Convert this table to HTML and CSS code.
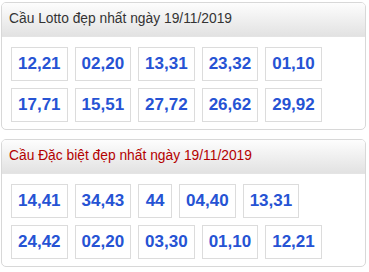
FILE: index.html
```html
<!DOCTYPE html>
<html>
<head>
<meta charset="utf-8">
<link rel="stylesheet" href="styles.css">
</head>
<body>
<div class="panel">
  <div class="head">Cầu Lotto đẹp nhất ngày 19/11/2019</div>
  <div class="body">
    <div class="row"><span class="num">12,21</span><span class="num">02,20</span><span class="num">13,31</span><span class="num">23,32</span><span class="num">01,10</span></div>
    <div class="row"><span class="num">17,71</span><span class="num">15,51</span><span class="num">27,72</span><span class="num">26,62</span><span class="num">29,92</span></div>
  </div>
</div>
<div class="panel">
  <div class="head red">Cầu Đặc biệt đẹp nhất ngày 19/11/2019</div>
  <div class="body">
    <div class="row"><span class="num">14,41</span><span class="num">34,43</span><span class="num">44</span><span class="num">04,40</span><span class="num">13,31</span></div>
    <div class="row"><span class="num">24,42</span><span class="num">02,20</span><span class="num">03,30</span><span class="num">01,10</span><span class="num">12,21</span></div>
  </div>
</div>
</body>
</html>
```
FILE: styles.css
```css
html, body { margin: 0; padding: 0; background: #fff; }
body {
  padding: 2px 4px 0 1px;
  font-family: "Liberation Sans", Arial, sans-serif;
  display: flex;
  flex-direction: column;
  gap: 9px;
}
.panel {
  border: 1px solid #d8d8d8;
  border-radius: 5px;
  overflow: hidden;
  width: 363px;
}
.head {
  height: 33px;
  line-height: 31px;
  padding-left: 7px;
  font-size: 13.8px;
  color: #333;
  background: linear-gradient(#fdfdfd, #e2e2e2);
  border-bottom: 1px solid #e4e4e4;
}
.head.red { color: #b40000; }
.body {
  padding: 10px 9px 7px;
  display: flex;
  flex-direction: column;
  gap: 7px;
}
.row { display: flex; gap: 7px; }
.num {
  border: 1px solid #dcdcdc;
  padding: 6px 6px;
  height: 20px;
  line-height: 20px;
  font-size: 17px;
  font-weight: bold;
  color: #2653d4;
  min-width: 20px;
  text-align: center;
}
```
